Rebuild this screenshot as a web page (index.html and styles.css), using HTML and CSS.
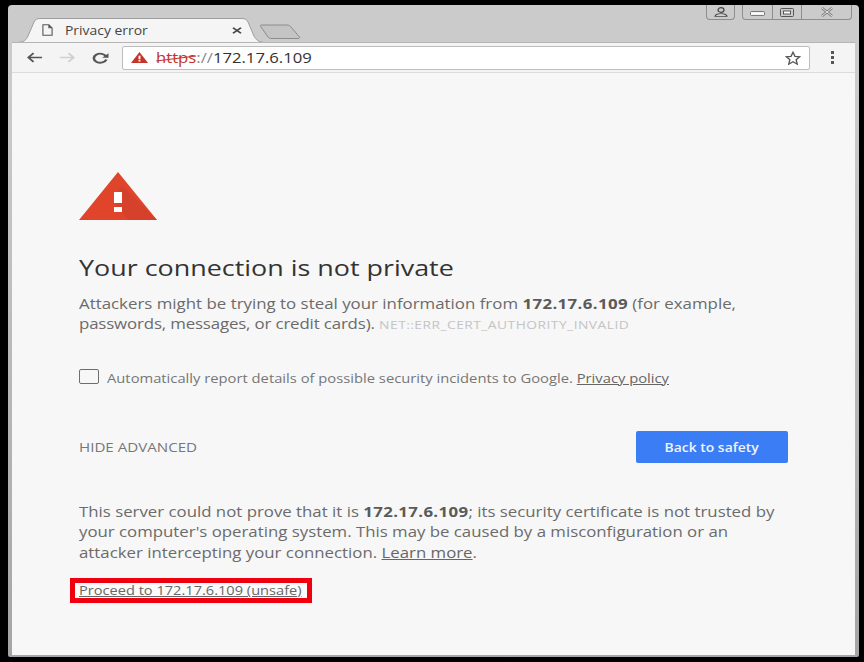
FILE: index.html
```html
<!DOCTYPE html>
<html lang="en">
<head>
<meta charset="utf-8">
<title>Privacy error</title>
<link rel="stylesheet" href="styles.css">
</head>
<body>
<div class="window">
  <div class="tabstrip">
    <div class="tab">
      <svg class="tab-shape" viewBox="0 0 243 24" preserveAspectRatio="none"><path d="M0 24C4 24 6 22 8 18L14 4C15 1.500 17 .5 20 .5H222C225 .5 227 1.500 228 4L234 18C236 22 239 24 243 24" fill="#f6f5f6" stroke="#9e9e9e"/></svg>
      <svg class="page-icon" viewBox="0 0 12 14" preserveAspectRatio="none"><path d="M1 1H7.500L11 4.500V13H1ZM7.500 1V4.500H11" fill="none" stroke="#555" stroke-width="1.200"/></svg>
      <span class="tab-title">Privacy error</span>
      <svg class="tab-close" viewBox="0 0 10 10" preserveAspectRatio="none"><path d="M1 1L9 9M9 1L1 9" stroke="#444" stroke-width="1.900"/></svg>
    </div>
    <svg class="newtab" viewBox="0 0 41 15"><path d="M1 1H27C29 1 30 2 31 3L39.500 13C40 14 39 14.500 38 14.500H12C10 14.500 9 14 8 13L1 3C.5 2 0 1 1 1Z" fill="#c4c4c4" stroke="#8c8c8c"/></svg>
    <div class="caption">
      <div class="cap-btn cap-user">
        <svg viewBox="0 0 14 10" width="14" height="10"><ellipse cx="7" cy="3" rx="3" ry="2.300" fill="none" stroke="#444" stroke-width="1.200"/><path d="M1 9.300C1.500 5.800 12.500 5.800 13 9.300Z" fill="#fff" stroke="#444" stroke-width="1.100"/></svg>
      </div>
      <div class="cap-group">
        <div class="cap-btn cap-min"><svg viewBox="0 0 16 5" width="15" height="5"><rect x=".5" y=".5" width="15" height="4" rx="1" fill="#fff" stroke="#666"/></svg></div>
        <div class="cap-btn cap-max"><svg viewBox="0 0 14 9" width="14" height="9"><rect x=".5" y=".5" width="13" height="8" rx="1" fill="none" stroke="#555"/><rect x="3.500" y="3" width="7" height="3" fill="#fff" stroke="#555"/></svg></div>
        <div class="cap-btn cap-close"><svg viewBox="0 0 14 10" width="14" height="10"><path d="M2 1L12 9M12 1L2 9" stroke="#777" stroke-width="2.400"/><path d="M2 1L12 9M12 1L2 9" stroke="#e8e8e8" stroke-width="1"/></svg></div>
      </div>
    </div>
  </div>
  <div class="toolbar">
    <svg class="nav" viewBox="0 0 18 14" preserveAspectRatio="none"><path d="M17 7H2.500M8 1.500L2.500 7L8 12.500" fill="none" stroke="#555" stroke-width="2"/></svg>
    <svg class="nav nav-off" viewBox="0 0 18 14" preserveAspectRatio="none"><path d="M1 7H15.500M10 1.500L15.500 7L10 12.500" fill="none" stroke="#cfcfcf" stroke-width="2"/></svg>
    <svg class="nav nav-reload" viewBox="0 0 16 16" preserveAspectRatio="none"><path d="M13.300 6A6 6 0 1 0 13.500 10" fill="none" stroke="#555" stroke-width="2.400"/><path d="M15.500 1.500V7.500H9.500Z" fill="#555"/></svg>
    <div class="omnibox">
      <svg class="warn-small" viewBox="0 0 18 15" preserveAspectRatio="none"><path d="M9 0L18 15H0Z" fill="#c5352a"/><rect x="8" y="5" width="2" height="5" fill="#fff"/><rect x="8" y="11" width="2" height="2" fill="#fff"/></svg>
      <span class="url"><span class="scheme">https</span><span class="sep">://</span>172.17.6.109</span>
      <svg class="star" viewBox="0 0 18 17" preserveAspectRatio="none"><path d="M9 1.500L11.200 6.500L16.600 7L12.500 10.600L13.800 16L9 13.100L4.200 16L5.500 10.600L1.400 7L6.800 6.500Z" fill="none" stroke="#555" stroke-width="1.500"/></svg>
    </div>
    <div class="menu"><i></i><i></i><i></i></div>
  </div>
  <main class="page">
    <svg class="warn" viewBox="0 0 78 48"><path d="M39 0L78 48H0Z" fill="#e0452b"/><path d="M39 18L44 14L78 48H50L37 35Z" fill="#d5412a"/><rect x="35" y="20" width="8" height="11" fill="#fff"/><rect x="35" y="35" width="8" height="5" fill="#fff"/></svg>
    <h1>Your connection is not private</h1>
    <p class="lead">Attackers might be trying to steal your information from <b>172.17.6.109</b> (for example, <span class="lead-tail">passwords, messages, or credit cards).</span> <span class="code">NET::ERR_CERT_AUTHORITY_INVALID</span></p>
    <div class="report">
      <span class="check"></span>
      <span class="report-text">Automatically report details of possible security incidents to Google. <a href="#">Privacy policy</a></span>
    </div>
    <div class="actions">
      <span class="hide">HIDE ADVANCED</span>
      <button class="safety" type="button"><span class="safety-label">Back to safety</span></button>
    </div>
    <p class="detail">This server could not prove that it is <b>172.17.6.109</b>; its security certificate is not trusted by your computer's operating system. This may be caused by a misconfiguration or an attacker intercepting your connection. <a href="#">Learn more</a>.</p>
    <div class="proceed"><a class="proceed-link" href="#">Proceed to 172.17.6.109 (unsafe)</a></div>
  </main>
</div>
</body>
</html>
```

FILE: styles.css
```css
* { box-sizing: border-box; }
html, body { margin: 0; height: 100%; }
body {
  background: #000;
  padding: 5px 0 0 8px;
  font-family: "Open Sans", "Liberation Sans", sans-serif;
  overflow: hidden;
}
.window {
  width: 851px;
  height: 652px;
  background: linear-gradient(#cbcbcb 80px, #a5a5a5);
  border-radius: 4px 4px 2px 2px;
  padding: 0 4px 2px 4px;
  display: flex;
  flex-direction: column;
}
.tabstrip {
  height: 37px;
  display: flex;
  align-items: flex-start;
  flex: none;
}
.tab {
  position: relative;
  width: 243px;
  height: 24px;
  margin: 13px 0 0 8px;
  display: flex;
  align-items: center;
  flex: none;
}
.tab-shape { position: absolute; inset: 0; width: 100%; height: 100%; }
.page-icon { position: relative; width: 11px; height: 12px; margin-left: 22px; }
.tab-title {
  position: relative;
  width: 167px;
  margin-left: 12px;
  font-size: 12px;
  color: #444;
  white-space: nowrap;
  transform: scaleX(1.16);
  transform-origin: left;
}
.tab-close { position: relative; width: 10px; height: 7px; }
.newtab { width: 41px; height: 15px; margin: 19px 0 0 -3px; flex: none; }
.caption {
  margin-left: auto;
  margin-right: 3px;
  display: flex;
  gap: 7px;
}
.cap-btn {
  height: 15px;
  display: flex;
  align-items: center;
  justify-content: center;
  border: 1px solid #8e8e8e;
  border-top: 0;
}
.cap-user { width: 29px; border-radius: 0 0 4px 4px; }
.cap-group { display: flex; }
.cap-min { width: 31px; border-radius: 0 0 0 4px; align-items: flex-end; padding-bottom: 3px; }
.cap-max { width: 29px; border-left: 0; }
.cap-close { width: 50px; border-left: 0; border-radius: 0 0 4px 0; }
.toolbar {
  height: 31px;
  background: #f5f4f5;
  border-bottom: 1px solid #dcdcdc;
  border-top: 1px solid #b5b5b5;
  display: flex;
  align-items: center;
  flex: none;
  padding-left: 14px;
}
.nav { width: 17px; height: 11px; flex: none; }
.nav-off { margin-left: 16px; }
.nav-reload { margin-left: 16px; height: 12px; }
.omnibox {
  width: 688px;
  height: 24px;
  margin-left: 13px;
  background: #fff;
  border: 1px solid #bdbdbd;
  border-radius: 2px;
  display: flex;
  align-items: center;
  padding: 0 8px;
  flex: none;
}
.warn-small { width: 17px; height: 11px; flex: none; }
.url {
  display: inline-block;
  margin-left: 8px;
  font-size: 14.500px;
  color: #333;
  white-space: nowrap;
  transform: scaleX(1.15);
  transform-origin: left;
}
.scheme { position: relative; color: #c5352a; }
.scheme::after {
  content: "";
  position: absolute;
  left: 0;
  right: 0;
  top: 10px;
  height: 1px;
  background: #c5352a;
  transform: rotate(-8deg);
}
.sep { color: #888; }
.star { width: 16px; height: 14px; margin-left: auto; flex: none; }
.menu {
  flex: none;
  margin-left: 21px;
  display: flex;
  flex-direction: column;
  gap: 2px;
}
.menu i { width: 3px; height: 3px; background: #555; display: block; }
.page {
  flex: 1;
  background: #f7f7f7;
  padding: 99px 0 0 67px;
  color: #6b6b6b;
  font-size: 14px;
}
.warn { display: block; width: 78px; height: 48px; }
h1 {
  width: 310px;
  margin: 32px 0 0;
  font-size: 22px;
  line-height: 30px;
  font-weight: 400;
  color: #333;
  white-space: nowrap;
  transform: scaleX(1.222);
  transform-origin: left;
}
.lead, .detail {
  width: 585px;
  margin: 12px 0 0;
  transform: scaleX(1.204);
  transform-origin: left;
}
.lead { line-height: 20px; }
.lead-tail { letter-spacing: -.13px; }
.lead b, .detail b { font-weight: 700; letter-spacing: .3px; color: #5a5a5a; }
.code { font-size: 11.500px; letter-spacing: .37px; color: #c4c4c4; }
.report {
  display: flex;
  align-items: center;
  gap: 8px;
  margin-top: 34px;
  font-size: 12.500px;
  color: #767676;
  white-space: nowrap;
}
.report-text { transform: scaleX(1.18); transform-origin: left; }
a { color: #666; }
.check {
  width: 20px;
  height: 15px;
  margin-bottom: 3px;
  border: 1px solid #6e6e6e;
  border-radius: 2px;
  flex: none;
}
.actions {
  display: flex;
  align-items: center;
  justify-content: space-between;
  width: 709px;
  margin-top: 44px;
}
.hide { font-size: 12.500px; color: #777; transform: scaleX(1.21); transform-origin: left; }
.safety {
  width: 152px;
  height: 32px;
  border: 0;
  border-radius: 2px;
  background: #3b7df5;
  color: #eef4ff;
  font: 600 12px "Open Sans", "Liberation Sans", sans-serif;
}
.safety-label { display: inline-block; transform: scaleX(1.16); }
.detail { margin-top: 39px; line-height: 20.300px; transform: scaleX(1.2); }
.proceed {
  width: 242px;
  height: 25px;
  margin: 15px 0 0 -9px;
  border: 5px solid #f0000f;
  background: #fbfbfb;
  padding-left: 4px;
  font-size: 12.500px;
  line-height: 15px;
  white-space: nowrap;
}
.proceed-link { display: inline-block; transform: scaleX(1.168); transform-origin: left; }
```
